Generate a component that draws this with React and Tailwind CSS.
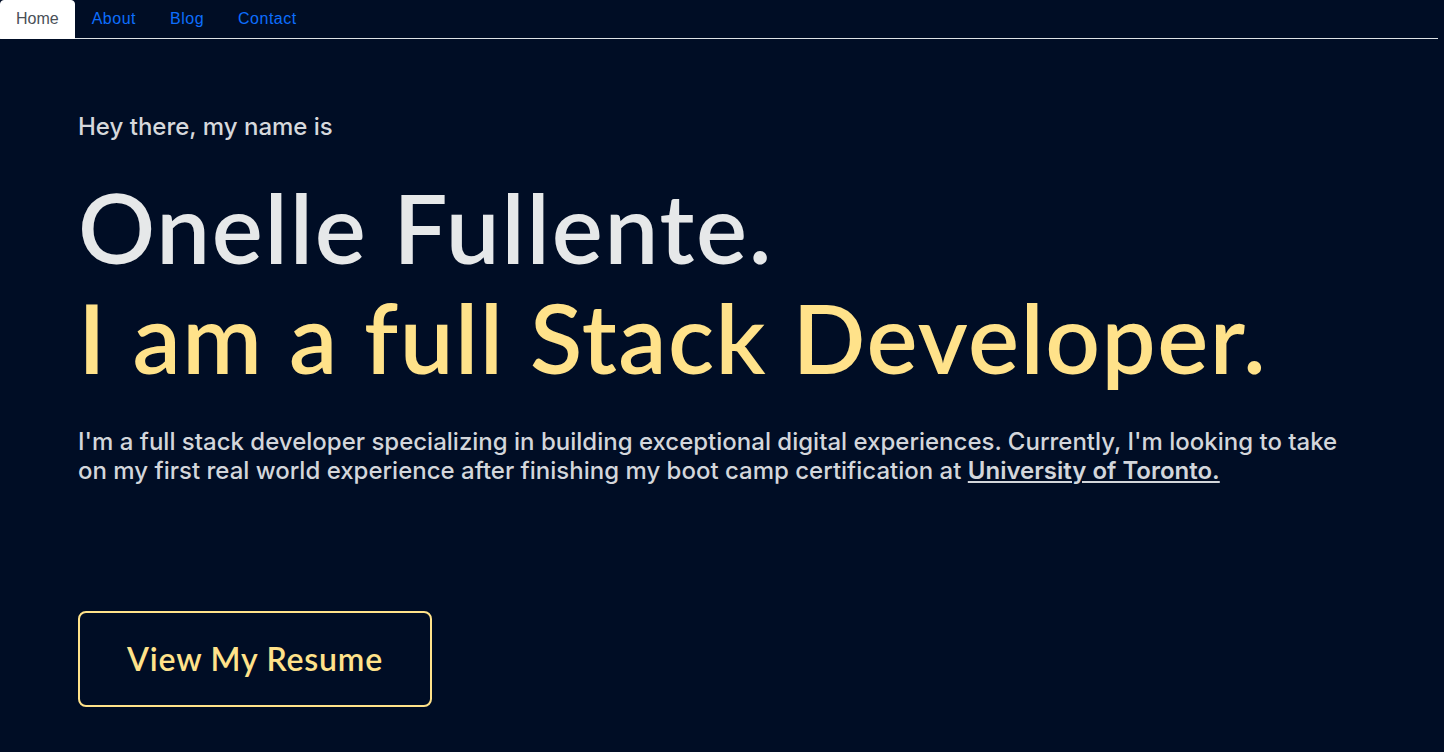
const App = () => {
  return (
    <div className="min-h-screen bg-[#000d25] font-['Inter',sans-serif]">

      {/* Nav tabs */}

      <nav className="flex w-[1438px] border-b border-[#dee2e6] font-['Liberation_Sans',Arial,sans-serif] text-base">
        <a className="px-[15px] py-2 leading-[20px] bg-white text-[#495057] rounded-t-[4px] -mb-px border border-white">
          Home
        </a>
        <a className="px-4 py-2 leading-[20px] tracking-[0.5px] text-[#0d6efd] border border-transparent">
          About
        </a>
        <a className="px-4 py-2 leading-[20px] tracking-[0.5px] text-[#0d6efd] border border-transparent">
          Blog
        </a>
        <a className="px-4 py-2 leading-[20px] tracking-[0.5px] text-[#0d6efd] border border-transparent">
          Contact
        </a>
      </nav>

      {/* Hero */}

      <section className="pl-[78px] pt-[73px]">

        <p className="text-[24px] leading-[30px] font-medium text-[#d6d8dc]">
          Hey there, my name is
        </p>

        <h1 className="mt-[30px] font-['Lato',sans-serif] font-semibold tracking-[1.8px] text-[96px] leading-[110px] text-[#e6e8e9]">
          Onelle Fullente.
        </h1>

        <h2 className="font-['Lato',sans-serif] font-semibold tracking-[1.5px] text-[96px] leading-[110px] text-[#ffe28a]">
          I am a full Stack Developer.
        </h2>

        <p className="mt-[35px] max-w-[1266px] text-[24px] leading-[29px] font-medium text-[#d3d6db]">
          I'm a full stack developer specializing in building exceptional digital experiences. Currently, I'm looking to take on my first real world experience after finishing my boot camp certification at{" "}
          <a className="underline font-semibold">University of Toronto.</a>
        </p>

        <button className="mt-[126px] w-[354px] h-[96px] border-2 border-[#ffe28a] rounded-[8px] text-[#ffe28a] font-['Lato',sans-serif] font-semibold tracking-[0.8px] text-[32px]">
          View My Resume
        </button>

      </section>

    </div>
  );
};

export default App;
